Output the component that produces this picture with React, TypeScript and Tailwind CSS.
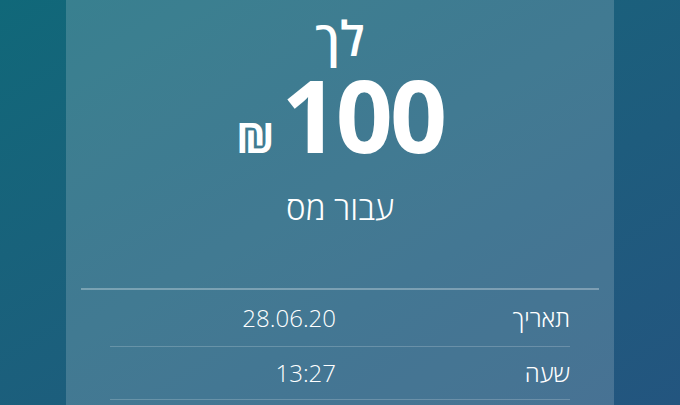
export default function App() {
  return (
    <div
      className="h-[405px] w-full overflow-hidden flex justify-center bg-gradient-to-br from-[#106879] to-[#23557f] text-white"
      style={{ fontFamily: '"Open Sans", "Noto Sans", "DejaVu Sans", sans-serif' }}
    >
      <div dir="rtl" className="w-[548px] h-full bg-white/[0.17] flex flex-col items-center">
        {/* headline */}
        <div className="mt-[12px] text-[48px] leading-[52px] font-semibold">לך</div>
        <div dir="ltr" className="flex items-baseline gap-[7px] h-[104px]">
          <span className="text-[42px] leading-[42px] font-bold">₪</span>
          <span className="text-[100px] leading-[100px] font-bold tracking-[-3px]">100</span>
        </div>
        <div className="mt-[18px] text-[33px] leading-[44px] font-light">עבור מס</div>

        {/* details */}
        <div className="mt-[58px] w-[518px] border-t-2 border-white/30">
          <div className="mx-[29px] h-[57px] flex items-center border-b border-white/20 text-[24px] font-light">
            <span className="w-[234px]">תאריך</span>
            <span dir="ltr" className="text-right">28.06.20</span>
          </div>
          <div className="mx-[29px] h-[53px] flex items-center border-b border-white/20 text-[24px] font-light">
            <span className="w-[234px]">שעה</span>
            <span dir="ltr" className="text-right">13:27</span>
          </div>
        </div>
      </div>
    </div>
  );
}
